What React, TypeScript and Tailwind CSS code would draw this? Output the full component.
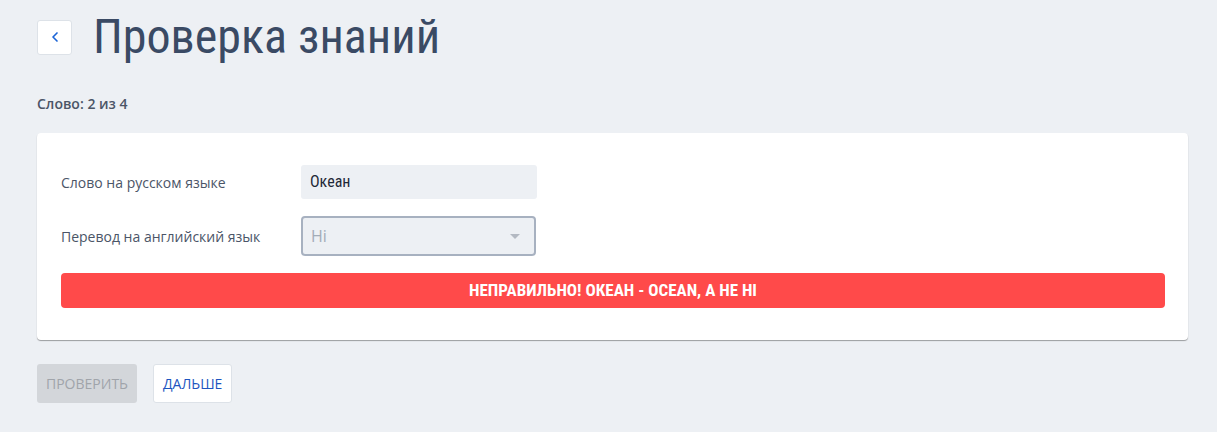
import { ChevronLeft } from 'lucide-react';

const cond = "font-['Roboto_Condensed','Roboto',sans-serif] [font-stretch:condensed]";

export default function App() {
  return (
    <div className="min-h-[432px] bg-[#edf0f4] pl-[37px] pr-[29px] pt-[17px] font-['Open_Sans',sans-serif]">
      {/* Header */}
      <div className="flex items-center gap-[21px]">
        <button className="flex h-[35px] w-[35px] items-center justify-center rounded-[3px] border border-[#dde2e8] bg-white text-[#1b64d6]">
          <ChevronLeft className="h-4 w-4" strokeWidth={2.5} />
        </button>
        <h1 className={`${cond} text-[48px] font-normal leading-[40px] text-[#3a4a64]`}>
          Проверка знаний
        </h1>
      </div>

      <div className="mt-[37px] text-[14px] font-semibold leading-[20px] text-[#4b5567]">Слово: 2 из 4</div>

      {/* Card */}
      <div className="mt-[19px] rounded-[4px] bg-white pl-6 pr-[23px] pb-8 pt-8 shadow-[0_1px_1px_rgba(0,0,0,0.35)]">
        <div className="flex items-center">
          <label className="w-[240px] text-[14px] text-[#4b5567]">Слово на русском языке</label>
          <div className={`${cond} flex h-[34px] w-[236px] items-center rounded-[3px] bg-[#edf0f4] px-[9px] text-[16px] text-[#1f2937]`}>
            Океан
          </div>
        </div>
        <div className="mt-[17px] flex items-center">
          <label className="w-[240px] text-[14px] text-[#4b5567]">Перевод на английский язык</label>
          <div className="flex h-[40px] w-[235px] items-center justify-between rounded-[4px] border-2 border-[#a7b1c0] bg-[#edf0f4] pl-2 pr-[14px]">
            <span className="text-[16px] text-[#a3acb8]">Hi</span>
            <span className="h-0 w-0 border-x-[5px] border-t-[5px] border-x-transparent border-t-[#b3b9c2]" />
          </div>
        </div>
        <div className={`${cond} mt-[17px] flex h-[35px] items-center justify-center rounded-[4px] bg-[#ff4a4a] text-[17px] font-bold uppercase text-white`}>
          Неправильно! Океан - Ocean, а не Hi
        </div>
      </div>

      {/* Actions */}
      <div className="mt-6 flex gap-4">
        <button className="h-[39px] rounded-[3px] bg-[#d3d6da] px-[9px] text-[14px] font-normal uppercase text-[#a0a4aa]">
          Проверить
        </button>
        <button className="h-[39px] rounded-[3px] border border-[#dde2e8] bg-white px-[9px] text-[14px] font-medium uppercase text-[#1d55c0]">
          Дальше
        </button>
      </div>
    </div>
  );
}
